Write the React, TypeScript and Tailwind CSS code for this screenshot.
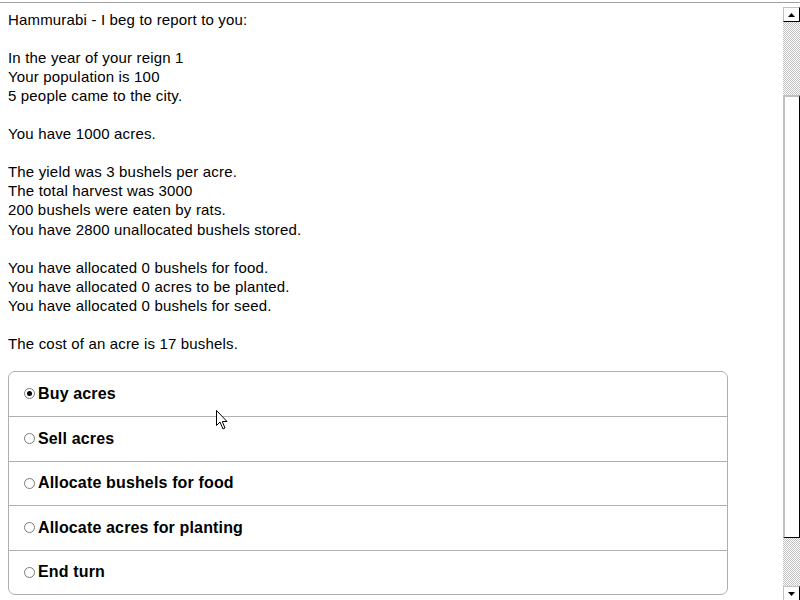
import React from "react";

const reportLines = [
  "Hammurabi - I beg to report to you:",
  "",
  "In the year of your reign 1",
  "Your population is 100",
  "5 people came to the city.",
  "",
  "You have 1000 acres.",
  "",
  "The yield was 3 bushels per acre.",
  "The total harvest was 3000",
  "200 bushels were eaten by rats.",
  "You have 2800 unallocated bushels stored.",
  "",
  "You have allocated 0 bushels for food.",
  "You have allocated 0 acres to be planted.",
  "You have allocated 0 bushels for seed.",
  "",
  "The cost of an acre is 17 bushels.",
];

// row heights include the 1px separator on top (border-box)
const actions = [
  { label: "Buy acres", height: "h-[44px]" },
  { label: "Sell acres", height: "h-[45px]" },
  { label: "Allocate bushels for food", height: "h-[44px]" },
  { label: "Allocate acres for planting", height: "h-[45px]" },
  { label: "End turn", height: "h-[44px]" },
];

function Radio({ checked }: { checked: boolean }) {
  return (
    <span className="flex h-[11px] w-[11px] shrink-0 items-center justify-center rounded-full border border-[#7a7a7a] bg-white">
      {checked && <span className="h-[5px] w-[5px] rounded-full bg-black" />}
    </span>
  );
}

function ArrowButton({ up }: { up: boolean }) {
  return (
    <div className="flex h-[15px] w-[17px] items-center justify-center border border-[#c0c0c0] border-r-black border-b-black bg-white">
      <svg width="7" height="4" viewBox="0 0 7 4">
        {up ? <path d="M3.5 0 L7 4 L0 4 Z" fill="#000" /> : <path d="M0 0 L7 0 L3.5 4 Z" fill="#000" />}
      </svg>
    </div>
  );
}

function Scrollbar() {
  const checker =
    "bg-[image:repeating-conic-gradient(#c0c0c0_0_25%,#ffffff_0_50%)] bg-[length:2px_2px]";
  return (
    <div className="flex h-[594px] w-[17px] flex-col">
      <ArrowButton up />
      <div className={`h-[73px] ${checker}`} />
      <div className="h-[443px] border-t-2 border-l-2 border-[#c0c0c0] border-r border-r-black border-b border-b-black bg-white" />
      <div className={`flex-1 ${checker}`} />
      <ArrowButton up={false} />
    </div>
  );
}

export default function App() {
  return (
    <div className="relative h-[600px] w-[800px] overflow-hidden bg-white font-['Liberation_Sans',Arial,sans-serif] text-black">
      <div className="mt-[2px] h-px w-full bg-[#a0a0a0]" />
      <div className="mt-[4px] flex">
        <div className="flex-1 px-2">
          <div className="pt-[3px] text-[15px] leading-[19.05px] tracking-[0.17px]">
            {reportLines.map((line, i) => (
              <div key={i} className="h-[19.05px] whitespace-pre">
                {line}
              </div>
            ))}
          </div>

          <div className="mt-[18px] w-[720px] overflow-hidden rounded-[7px] border border-[#b0b0b0]">
            {actions.map((a, i) => (
              <div
                key={a.label}
                className={`flex ${a.height} items-center gap-[3px] pl-[15px] ${i > 0 ? "border-t border-[#b0b0b0]" : ""}`}
              >
                <Radio checked={i === 0} />
                <span className="text-[16px] font-bold leading-5 tracking-[0.15px]">{a.label}</span>
              </div>
            ))}
          </div>
        </div>
        <Scrollbar />
      </div>

      <svg className="absolute left-[216px] top-[410px]" width="13" height="21" viewBox="0 0 13 21">
        <path
          d="M0.5 0.5 L0.5 15.5 L4 12 L7 19 L9 18 L6.3 11.5 L11 11.5 Z"
          fill="#fff"
          stroke="#000"
          strokeWidth="1"
        />
      </svg>
    </div>
  );
}
